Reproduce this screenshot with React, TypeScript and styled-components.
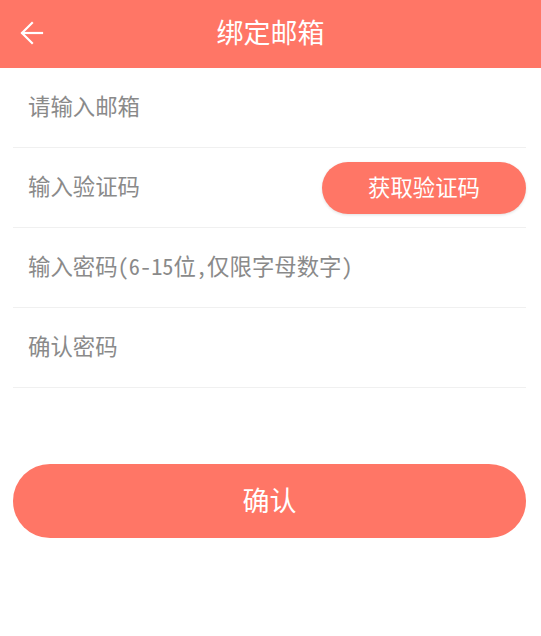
import React, { useState } from 'react';
import styled, { createGlobalStyle } from 'styled-components';

const GlobalStyle = createGlobalStyle`
  html, body {
    margin: 0;
    padding: 0;
    background: #ffffff;
    font-family: "Noto Sans Mono CJK SC", "Noto Sans CJK SC", "Noto Sans", sans-serif;
  }
`;

const Page = styled.div`
  width: 541px;
  min-height: 636px;
  display: flex;
  flex-direction: column;
  background: #ffffff;
`;

const Header = styled.div`
  height: 68px;
  background: #ff7666;
  display: flex;
  align-items: center;
  justify-content: center;
  position: relative;
`;

const BackButton = styled.button`
  position: absolute;
  left: 16px;
  top: 18px;
  width: 32px;
  height: 30px;
  padding: 0;
  border: none;
  background: transparent;
  display: flex;
  align-items: center;
  justify-content: center;
  cursor: pointer;
`;

const Title = styled.h1`
  margin: 0;
  padding-bottom: 6px;
  font-size: 27px;
  font-weight: 400;
  color: #ffffff;
`;

const Form = styled.div`
  display: flex;
  flex-direction: column;
  padding: 0 15px 0 13px;
`;

const Row = styled.div`
  height: 79px;
  display: flex;
  align-items: center;
  justify-content: space-between;
  border-bottom: 1px solid #f0f0f0;
`;

const Input = styled.input`
  flex: 1;
  min-width: 0;
  border: none;
  outline: none;
  background: transparent;
  padding: 0 0 5px 15px;
  font-family: inherit;
  font-size: 22.4px;
  color: #333;

  &::placeholder {
    color: #8a8a8a;
  }
`;

const CodeButton = styled.button`
  width: 204px;
  height: 52px;
  padding: 0 0 4px;
  border: none;
  border-radius: 26px;
  background: #ff7666;
  color: #ffffff;
  font-family: inherit;
  font-size: 22.4px;
  box-shadow: 0 1px 3px rgba(0, 0, 0, 0.12);
  cursor: pointer;
`;

const ConfirmButton = styled.button`
  margin: 76px 15px 0 13px;
  height: 74px;
  padding: 0 0 4px;
  border: none;
  border-radius: 37px;
  background: #ff7666;
  color: #ffffff;
  font-family: inherit;
  font-size: 27px;
  cursor: pointer;
`;

const BackArrow = () => (
  <svg width="24" height="24" viewBox="0 0 24 24" fill="none" stroke="#ffffff" strokeWidth="2.2" strokeLinecap="square">
    <path d="M22 12H2.5" />
    <path d="M12 2 2 12l10 10" />
  </svg>
);

const App: React.FC = () => {
  const [email, setEmail] = useState('');
  const [code, setCode] = useState('');
  const [password, setPassword] = useState('');
  const [confirm, setConfirm] = useState('');

  return (
    <Page>
      <GlobalStyle />
      <Header>
        <BackButton>
          <BackArrow />
        </BackButton>
        <Title>绑定邮箱</Title>
      </Header>
      <Form>
        <Row>
          <Input placeholder="请输入邮箱" value={email} onChange={e => setEmail(e.target.value)} />
        </Row>
        <Row>
          <Input placeholder="输入验证码" value={code} onChange={e => setCode(e.target.value)} />
          <CodeButton>获取验证码</CodeButton>
        </Row>
        <Row>
          <Input
            type="password"
            placeholder="输入密码(6-15位,仅限字母数字)"
            value={password}
            onChange={e => setPassword(e.target.value)}
          />
        </Row>
        <Row>
          <Input type="password" placeholder="确认密码" value={confirm} onChange={e => setConfirm(e.target.value)} />
        </Row>
      </Form>
      <ConfirmButton>确认</ConfirmButton>
    </Page>
  );
};

export default App;
